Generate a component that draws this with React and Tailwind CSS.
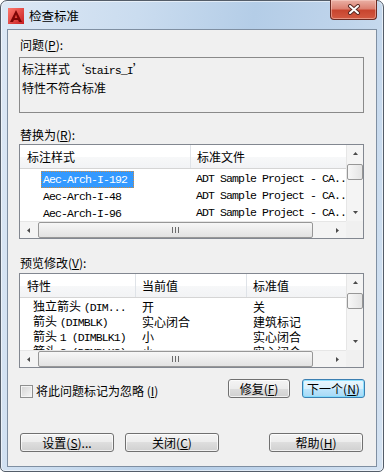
import React from "react";

const cjk = "font-['Noto_Sans_CJK_SC',sans-serif]";
const mono = "font-['Liberation_Mono',monospace] text-[11.5px] tracking-[-0.9px]";

const M = ({ children }) => <span className={mono}>{children}</span>;

function Tri({ dir }) {
  const vert = dir === "up" || dir === "down";
  const pts = {
    up: "0,3 2.5,0 5,3",
    down: "0,0 5,0 2.5,3",
    left: "3,0 3,5 0,2.5",
    right: "0,0 0,5 3,2.5",
  }[dir];
  return (
    <svg width={vert ? 5 : 3} height={vert ? 3 : 5} viewBox={vert ? "0 0 5 3" : "0 0 3 5"}>
      <polygon points={pts} fill="#4a4a4a" />
    </svg>
  );
}

function VScroll() {
  return (
    <div className="w-[17px] h-full flex flex-col bg-[#f4f4f4] border-l border-[#e6e6e6]">
      <div className="h-[17px] flex items-center justify-center">
        <Tri dir="up" />
      </div>
      <div className="mt-[2px] h-[16px] rounded-[2px] border border-[#979797] bg-[linear-gradient(90deg,#f7f7f7,#e4e4e4)]" />
      <div className="flex-1" />
      <div className="h-[17px] flex items-center justify-center">
        <Tri dir="down" />
      </div>
    </div>
  );
}

function HScroll() {
  return (
    <div className="h-[17px] flex">
      <div className="flex-1 flex bg-[#f4f4f4] border-t border-[#e6e6e6]">
        <div className="w-[17px] flex items-center justify-center">
          <Tri dir="left" />
        </div>
        <div className="ml-[1px] w-[275px] rounded-[2px] border border-[#979797] bg-[linear-gradient(180deg,#f7f7f7,#e2e2e2)] flex items-center justify-center gap-[2px]">
          <div className="w-[1px] h-[6px] bg-[#6b6b6b]" />
          <div className="w-[1px] h-[6px] bg-[#6b6b6b]" />
          <div className="w-[1px] h-[6px] bg-[#6b6b6b]" />
        </div>
        <div className="flex-1" />
        <div className="w-[17px] flex items-center justify-center">
          <Tri dir="right" />
        </div>
      </div>
      <div className="w-[17px] bg-[#f0f0f0]" />
    </div>
  );
}

const headerBg =
  "bg-[linear-gradient(180deg,#ffffff_0%,#ffffff_50%,#f7f8f9_50%,#f2f3f5_100%)] border-b border-[#d5d5d5]";

function List1() {
  const rows = ["Aec-Arch-I-192", "Aec-Arch-I-48", "Aec-Arch-I-96"];
  return (
    <div className="ml-[11px] mr-[12px] h-[95px] border border-[#828790] bg-white flex flex-col">
      <div className="flex h-[76px]">
        <div className="flex-1 min-w-0 overflow-hidden">
          <div className={`h-[24px] flex ${headerBg}`}>
            <div className="w-[171px] pl-[7px] flex items-center border-r border-[#dfe3e8]">标注样式</div>
            <div className="flex-1 pl-[6px] flex items-center">标准文件</div>
          </div>
          <div className="pt-[1px]">
            {rows.map((r, i) => (
              <div key={r} className="h-[17px] leading-[17px] flex items-center">
                <div className="w-[171px] pl-[21px]">
                  {i === 0 ? (
                    <span className={`inline-flex items-center h-[17px] pl-[2px] pr-[7px] bg-[#3399ff] text-white outline-1 outline-dotted outline-[#d08a3c] -outline-offset-1 ${mono}`}>
                      {r}
                    </span>
                  ) : (
                    <span className={`pl-[2px] ${mono}`}>{r}</span>
                  )}
                </div>
                <div className={`pl-[6px] whitespace-nowrap ${mono}`}>ADT Sample Project - CA..</div>
              </div>
            ))}
          </div>
        </div>
        <VScroll />
      </div>
      <HScroll />
    </div>
  );
}

function List2() {
  const rows = [
    ["独立箭头 ", "(DIM...", "开", "关"],
    ["箭头 ", "(DIMBLK)", "实心闭合", "建筑标记"],
    ["箭头 ", "1 (DIMBLK1)", "小", "实心闭合"],
    ["箭头 ", "2 (DIMBLK2)", "小", "实心闭合"],
  ];
  return (
    <div className="ml-[11px] mr-[12px] h-[95px] border border-[#828790] bg-white flex flex-col">
      <div className="flex h-[76px]">
        <div className="flex-1 min-w-0 overflow-hidden">
          <div className={`h-[24px] flex ${headerBg}`}>
            <div className="w-[116px] pl-[7px] flex items-center border-r border-[#dfe3e8]">特性</div>
            <div className="w-[111px] pl-[6px] flex items-center border-r border-[#dfe3e8]">当前值</div>
            <div className="flex-1 pl-[6px] flex items-center">标准值</div>
          </div>
          <div className="pt-[1px]">
            {rows.map((r, i) => (
              <div key={i} className="h-[15px] leading-[15px] flex items-center whitespace-nowrap">
                <div className="w-[116px] pl-[13px]">
                  {r[0]}
                  <M>{r[1]}</M>
                </div>
                <div className="w-[111px] pl-[6px]">{r[2]}</div>
                <div className="pl-[6px]">{r[3]}</div>
              </div>
            ))}
          </div>
        </div>
        <VScroll />
      </div>
      <HScroll />
    </div>
  );
}

const btn =
  "h-[19px] flex items-center justify-center rounded-[3px] border border-[#707070] bg-[linear-gradient(180deg,#f4f4f4_0%,#ececec_50%,#dedede_50%,#d0d0d0_100%)] shadow-[inset_0_0_0_1px_rgba(255,255,255,0.7)] leading-none";
const btnFocus =
  "h-[19px] flex items-center justify-center rounded-[3px] border border-[#3c7fb1] bg-[linear-gradient(180deg,#eaf6fd_0%,#d9f0fc_50%,#bee6fd_50%,#a7d9f5_100%)] shadow-[inset_0_0_0_1px_rgba(120,220,255,0.8)] leading-none";

export default function App() {
  return (
    <div className={`w-[384px] h-[472px] ${cjk} text-[12px] text-black`}>
      <div className="w-full h-full flex flex-col rounded-t-[7px] rounded-b-[5px] border border-[#545d69] bg-[linear-gradient(100deg,#dde8f5_0%,#cadcef_30%,#b4cde7_55%,#bfd4eb_75%,#d5e3f2_100%)] px-[6px] pb-[4px] shadow-[inset_0_0_0_1px_rgba(255,255,255,0.55)]">
        {/* title bar */}
        <div className="relative h-[28px] flex items-start pt-[7px] pl-[1px]">
          <svg width="16" height="16" viewBox="0 0 16 16">
            <defs>
              <linearGradient id="acad" x1="0" y1="0" x2="1" y2="1">
                <stop offset="0" stopColor="#ff7a6e" />
                <stop offset="1" stopColor="#c81e22" />
              </linearGradient>
            </defs>
            <rect width="16" height="16" fill="url(#acad)" />
            <polygon points="8,2 14,14 11,14 10,12 6,12 5,14 2,14" fill="#7d0606" />
            <polygon points="8,6.5 9.3,10 6.7,10" fill="#e8453c" />
          </svg>
          <span className="ml-[5px] text-[12.5px] leading-[16px] text-black">检查标准</span>
          <div className="absolute top-[-1px] right-0 w-[47px] h-[20px] rounded-b-[4px] border border-t-0 border-[#6b2a22] bg-[linear-gradient(180deg,#eab0a5_0%,#dc8172_45%,#c8452f_55%,#d35a42_100%)] shadow-[inset_0_0_0_1px_rgba(255,220,210,0.45)] flex items-center justify-center">
            <svg width="14" height="11" viewBox="0 0 14 11">
              <path d="M3 2 L11 9 M11 2 L3 9" stroke="#5a2a24" strokeWidth="4" strokeLinecap="round" />
              <path d="M3 2 L11 9 M11 2 L3 9" stroke="#ffffff" strokeWidth="2" strokeLinecap="round" />
            </svg>
          </div>
        </div>

        {/* client area */}
        <div className="flex-1 border border-[#7f8fa2] bg-[#f0f0f0] flex flex-col">
          <div className="pl-[12px] mt-[7px] leading-[16px]">
            问题(<u>P</u>):
          </div>
          <div className="ml-[11px] mr-[12px] mt-[4px] h-[56px] border border-[#8a8a8a] px-[2px] pt-[2px] leading-[17px]">
            <div>
              标注样式 ‘<M>Stairs_I</M>’
            </div>
            <div>特性不符合标准</div>
          </div>

          <div className="pl-[12px] mt-[14px] leading-[16px]">
            替换为(<u>R</u>):
          </div>
          <div className="mt-[1px]">
            <List1 />
          </div>

          <div className="pl-[12px] mt-[16px] leading-[16px]">
            预览修改(<u>V</u>):
          </div>
          <div className="mt-[2px]">
            <List2 />
          </div>

          <div className="mt-[11px] h-[19px] flex items-end pl-[12px] pr-[11px]">
            <div className="flex items-center">
              <div className="w-[13px] h-[13px] border border-[#8e8f8f] bg-[linear-gradient(135deg,#d4d4d4,#f6f6f6)] shadow-[inset_0_0_0_1px_#f4f4f4]" />
              <span className="ml-[3px] leading-[14px]">
                将此问题标记为忽略 (<u>I</u>)
              </span>
            </div>
            <div className="ml-auto flex gap-[12px] self-stretch">
              <div className={`w-[62px] ${btn}`}>
                修复(<u>F</u>)
              </div>
              <div className={`w-[63px] ${btnFocus}`}>
                下一个(<u>N</u>)
              </div>
            </div>
          </div>

          <div className="mt-[35px] flex pl-[12px] pr-[13px]">
            <div className={`w-[94px] ${btn}`}>
              设置(<u>S</u>)...
            </div>
            <div className={`ml-[11px] w-[94px] ${btn}`}>
              关闭(<u>C</u>)
            </div>
            <div className={`ml-auto w-[94px] ${btn}`}>
              帮助(<u>H</u>)
            </div>
          </div>
        </div>
      </div>
    </div>
  );
}
